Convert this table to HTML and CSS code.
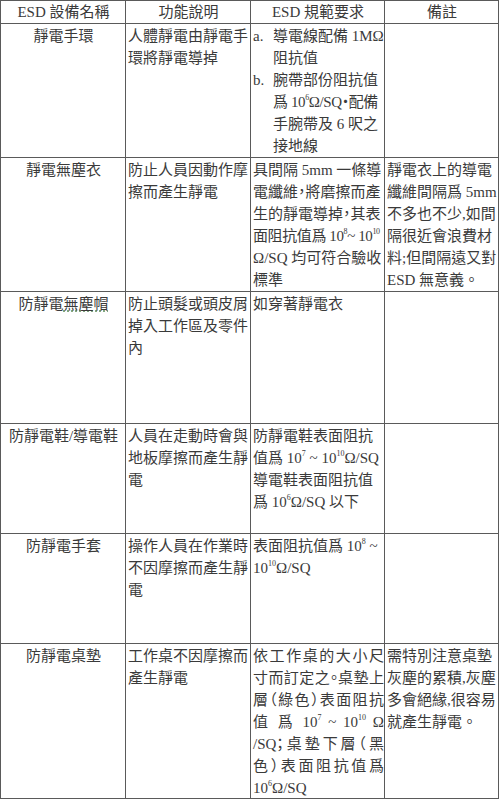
FILE: index.html
```html
<!DOCTYPE html>
<html lang="zh-Hant">
<head>
<meta charset="utf-8">
<link rel="stylesheet" href="styles.css">
</head>
<body>
<table class="esd">
<colgroup><col class="c1"><col class="c2"><col class="c3"><col class="c4"></colgroup>
<tr class="head">
<th>ESD 設備名稱</th><th>功能說明</th><th>ESD 規範要求</th><th>備註</th>
</tr>
<tr class="r1">
<td class="name">靜電手環</td>
<td>人體靜電由靜電手環將靜電導掉</td>
<td class="lines"><ol class="alpha"><li><span class="mk">a.</span><span>導電線配備 1MΩ<br>阻抗值</span></li><li><span class="mk">b.</span><span>腕帶部份阻抗值<br><span class="tight">爲 10<sup>6</sup>Ω/SQ<span class="halt">‧</span>配備</span><br>手腕帶及 6 呎之<br>接地線</span></li></ol></td>
<td></td>
</tr>
<tr class="r2">
<td class="name">靜電無塵衣</td>
<td>防止人員因動作摩擦而產生靜電</td>
<td class="lines">具間隔 5mm 一條導<br>電纖維<span class="halt">，</span>將磨擦而產<br>生的靜電導掉<span class="halt">，</span>其表<br><span class="tight">面阻抗值爲 10<sup>8</sup>~ 10<sup>10</sup></span><br>Ω/SQ 均可符合驗收<br>標準</td>
<td>靜電衣上的導電纖維間隔爲 5mm 不多也不少,如間隔很近會浪費材料;但間隔遠又對 ESD 無意義。</td>
</tr>
<tr class="r3">
<td class="name">防靜電<span class="spell">無塵帽</span></td>
<td>防止頭髮或頭皮屑掉入工作區及零件內</td>
<td>如穿著靜電衣</td>
<td></td>
</tr>
<tr class="r4">
<td class="name">防靜電鞋/導電鞋</td>
<td>人員在走動時會與地板摩擦而產生靜電</td>
<td class="lines">防靜電鞋表面阻抗<br>值爲 10<sup>7</sup> ~ 10<sup>10</sup>Ω/SQ<br>導電鞋表面阻抗值<br>爲 10<sup>6</sup>Ω/SQ 以下</td>
<td></td>
</tr>
<tr class="r5">
<td class="name">防靜電手套</td>
<td>操作人員在作業時不因摩擦而產生靜電</td>
<td class="lines">表面阻抗值爲 10<sup>8</sup> ~<br>10<sup>10</sup>Ω/SQ</td>
<td></td>
</tr>
<tr class="r6">
<td class="name">防靜電桌墊</td>
<td>工作桌不因摩擦而產生靜電</td>
<td class="lines"><span class="jl">依工作桌的大小尺</span><span class="jl">寸而訂定之<span class="halt">。</span>桌墊上</span><span class="jl">層<span class="halt">（</span>綠色<span class="halt">）</span>表面阻抗</span><span class="jl">值 爲 10<sup>7</sup> ~ 10<sup>10</sup> Ω</span><span class="jl">/SQ<span class="halt">；</span>桌墊下層<span class="halt">（</span>黑</span><span class="jl">色<span class="halt">）</span>表面阻抗值爲</span><span class="ll">10<sup>6</sup>Ω/SQ</span></td>
<td>需特別注意桌墊灰塵的累積,灰塵多會絕緣,很容易就產生靜電。</td>
</tr>
</table>
</body>
</html>
```
FILE: styles.css
```css
html, body {
  margin: 0;
  padding: 0;
  background: #fff;
}
body {
  font-family: "Liberation Serif", "Noto Sans CJK TC", serif;
  font-size: 15px;
  color: #3a3a3a;
}
.esd {
  border-collapse: collapse;
  table-layout: fixed;
  width: 498px;
}
.c1 { width: 125px; }
.c2 { width: 125px; }
.c3 { width: 134px; }
.c4 { width: 114px; }
.esd th, .esd td {
  border: 1px solid #5a5a5a;
  padding: 1px 1px 0 2px;
  vertical-align: top;
  line-height: 22px;
  font-weight: normal;
  word-break: break-all;
  text-align: left;
}
.esd th {
  text-align: center;
  height: 22px;
  padding-top: 0;
}
.esd td.name { text-align: center; }
.esd td.lines {
  white-space: nowrap;
  padding-right: 0;
}
.r1 td { height: 130px; }
.r2 td { height: 132px; }
.r3 td { height: 130px; }
.r4 td { height: 108px; }
.r5 td { height: 108px; }
.r6 td { height: 153px; }
.jl {
  display: block;
  height: 22px;
  text-align: justify;
  text-align-last: justify;
}
.ll {
  display: block;
  height: 21px;
}
.halt {
  font-family: "Noto Sans CJK TC", sans-serif;
  font-feature-settings: "halt" 1;
  line-height: 1;
}
.tight { letter-spacing: -0.4px; }
sup {
  font-size: 8px;
  line-height: 0;
  vertical-align: 7px;
}
.alpha {
  list-style: none;
  margin: 0;
  padding: 0;
}
.alpha li {
  display: flex;
}
.mk {
  flex: 0 0 20px;
}
.spell {
  text-decoration: underline;
  text-decoration-style: dotted;
  text-decoration-color: #5a8a5a;
  text-underline-offset: 2px;
}
```
